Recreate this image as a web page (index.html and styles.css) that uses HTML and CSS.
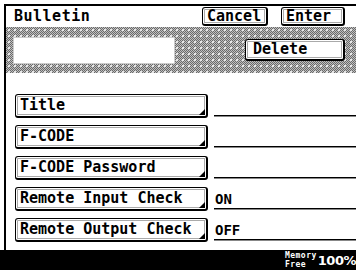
FILE: index.html
```html
<!DOCTYPE html>
<html>
<head>
<meta charset="utf-8">
<link rel="stylesheet" href="styles.css">
</head>
<body>
<div class="screen">
  <div class="frame">
    <div class="header">
      <span class="title">Bulletin</span>
      <div class="actions">
        <button class="btn btn-top btn-cancel">Cancel</button>
        <button class="btn btn-top btn-enter">Enter</button>
      </div>
    </div>
    <div class="hatch">
      <div class="input"></div>
      <button class="btn btn-delete">Delete</button>
    </div>
    <div class="rows">
      <div class="row"><button class="btn btn-item">Title</button><span class="value"></span></div>
      <div class="row"><button class="btn btn-item">F-CODE</button><span class="value"></span></div>
      <div class="row"><button class="btn btn-item">F-CODE Password</button><span class="value"></span></div>
      <div class="row"><button class="btn btn-item">Remote Input Check</button><span class="value">ON</span></div>
      <div class="row"><button class="btn btn-item">Remote Output Check</button><span class="value">OFF</span></div>
    </div>
  </div>
  <div class="status">
    <div class="mem"><span>Memory</span><span>Free</span></div>
    <span class="pct">100%</span>
  </div>
</div>
</body>
</html>
```
FILE: styles.css
```css
html, body {
  margin: 0;
  padding: 0;
  background: #fff;
}
.screen {
  width: 356px;
  height: 270px;
  overflow: hidden;
  display: flex;
  flex-direction: column;
  font-family: "DejaVu Sans Mono", monospace;
  font-weight: bold;
  color: #000;
}
.frame {
  flex: 1;
  margin: 4px 0 0 4px;
  border-top: 2px solid #000;
  border-left: 2px solid #000;
  display: flex;
  flex-direction: column;
}
.header {
  height: 21px;
  display: flex;
  align-items: center;
  padding-left: 8px;
}
.title {
  font-size: 15px;
  letter-spacing: 0.5px;
  line-height: 15px;
}
.actions {
  margin-left: auto;
  display: flex;
  gap: 13px;
  margin-right: 11px;
}
.btn {
  position: relative;
  box-sizing: border-box;
  margin: 0;
  background: #fff;
  border: 1px solid #000;
  border-right-width: 2px;
  border-bottom-width: 2px;
  border-radius: 3px;
  box-shadow: inset 0 0 0 1px #fff, inset 0 0 0 2px #aaa;
  font-family: inherit;
  font-weight: bold;
  color: #000;
  text-align: left;
  padding: 0 0 0 4px;
  line-height: 1;
}
.btn-top {
  height: 19px;
  font-size: 15px;
  padding-left: 4px;
}
.btn-cancel {
  width: 66px;
}
.btn-enter {
  width: 64px;
}
.hatch {
  height: 46px;
  display: flex;
  align-items: center;
  padding-left: 8px;
  background:
    radial-gradient(circle, #e6e6e6 0.9px, transparent 1.4px) 0 0 / 6px 6px,
    repeating-conic-gradient(#6a6a6a 0 25%, #c0c0c0 0 50%) 0 0 / 2px 2px;
}
.input {
  width: 160px;
  height: 25px;
  background: #fff;
  box-shadow: 0 0 0 1px #ccc;
}
.btn-delete {
  margin-left: auto;
  margin-right: 11px;
  width: 100px;
  height: 22px;
  font-size: 15px;
  padding-left: 7px;
}
.rows {
  padding-top: 21px;
  padding-left: 9px;
  display: flex;
  flex-direction: column;
  gap: 7px;
}
.row {
  display: flex;
  align-items: flex-end;
  height: 24px;
}
.btn-item {
  width: 193px;
  height: 24px;
  font-size: 15px;
  padding-left: 4px;
}
.btn-item::after {
  content: "";
  position: absolute;
  right: 1px;
  bottom: 1px;
  width: 0;
  height: 0;
  border-left: 6px solid transparent;
  border-bottom: 6px solid #000;
}
.value {
  flex: 1;
  margin-left: 6px;
  margin-bottom: 2px;
  height: 16px;
  border-bottom: 1px solid #000;
  box-shadow: 0 1px 0 #888;
  font-size: 14px;
  line-height: 14px;
  padding-left: 1px;
}
.status {
  height: 20px;
  background: #000;
  color: #fff;
  display: flex;
  align-items: center;
  justify-content: flex-end;
}
.mem {
  display: flex;
  flex-direction: column;
  font-size: 8px;
  line-height: 9px;
  letter-spacing: 0.5px;
  margin-right: 1px;
}
.pct {
  font-family: "DejaVu Sans", sans-serif;
  font-size: 13px;
  letter-spacing: -0.5px;
  font-weight: bold;
}
```
